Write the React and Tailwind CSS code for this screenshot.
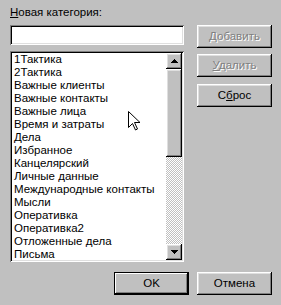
const items = [
  '1Тактика',
  '2Тактика',
  'Важные клиенты',
  'Важные контакты',
  'Важные лица',
  'Время и затраты',
  'Дела',
  'Избранное',
  'Канцелярский',
  'Личные данные',
  'Международные контакты',
  'Мысли',
  'Оперативка',
  'Оперативка2',
  'Отложенные дела',
  'Письма',
]

const raised = 'shadow-[inset_-1px_-1px_0_#000,inset_1px_1px_0_#fff,inset_-2px_-2px_0_#808080,inset_2px_2px_0_#dfdfdf]'
const sunken = 'shadow-[inset_1px_1px_0_#808080,inset_-1px_-1px_0_#fff,inset_2px_2px_0_#000,inset_-2px_-2px_0_#dfdfdf]'

function Btn({ children, disabled, isDefault }) {
  return (
    <div
      className={`h-[23px] w-[75px] flex items-center justify-center bg-[#c0c0c0] ${
        isDefault
          ? 'shadow-[inset_0_0_0_1px_#000,inset_-2px_-2px_0_#000,inset_2px_2px_0_#fff,inset_-3px_-3px_0_#808080]'
          : raised
      } ${disabled ? 'text-[#808080] [text-shadow:1px_1px_0_#fff]' : 'text-black'}`}
    >
      {children}
    </div>
  )
}

function Arrow({ up }) {
  return (
    <div className={`h-[16px] w-[16px] bg-[#c0c0c0] flex items-center justify-center ${raised}`}>
      <svg width="7" height="4" viewBox="0 0 7 4">
        {up ? <path d="M3 0h1v1h1v1h1v1h1v1H0V3h1V2h1V1h1z" fill="#000" /> : <path d="M0 0h7v1H6v1H5v1H4v1H3V3H2V2H1V1H0z" fill="#000" />}
      </svg>
    </div>
  )
}

export default function App() {
  return (
    <div
      className="relative w-[281px] h-[305px] bg-[#c0c0c0] text-[11.5px] leading-[13px] text-black overflow-hidden"
      style={{ fontFamily: '"Liberation Sans", Arial, sans-serif' }}
    >
      <div className="flex pl-[10px] pt-[6px]">
        <div className="w-[174px]">
          <div className="h-[19px]">
            <span className="underline">Н</span>овая категория:
          </div>
          <div className={`h-[20px] bg-white ${sunken}`} />
          <div className={`mt-[6px] h-[211px] bg-white flex p-[2px] ${sunken}`}>
            <div className="flex-1 pl-[2px] overflow-hidden">
              {items.map((t) => (
                <div key={t} className="h-[13px] whitespace-nowrap">{t}</div>
              ))}
            </div>
            <div className="w-[16px] flex flex-col">
              <Arrow up />
              <div className={`h-[88px] bg-[#c0c0c0] ${raised}`} />
              <div className="flex-1 bg-[repeating-conic-gradient(#fff_0_25%,#c0c0c0_0_50%)] bg-[length:2px_2px]" />
              <Arrow />
            </div>
          </div>
        </div>
        <div className="ml-[13px] pt-[19px] flex flex-col">
          <Btn disabled>
            <span><span className="underline">Д</span>обавить</span>
          </Btn>
          <div className="mt-[6px]">
            <Btn disabled>
              <span><span className="underline">У</span>далить</span>
            </Btn>
          </div>
          <div className="mt-[7px]">
            <Btn>
              <span>С<span className="underline">б</span>рос</span>
            </Btn>
          </div>
        </div>
      </div>
      <div className="flex justify-end gap-[8px] pr-[9px] mt-[10px]">
        <Btn isDefault>OK</Btn>
        <Btn>Отмена</Btn>
      </div>
      <svg className="absolute left-[128px] top-[111px]" width="12" height="20" viewBox="0 0 12 20">
        <path d="M0.5 0.5v16l4-4 3 6.5 2-1-3-6.5h5.5z" fill="#fff" stroke="#000" strokeWidth="1" />
      </svg>
    </div>
  )
}
